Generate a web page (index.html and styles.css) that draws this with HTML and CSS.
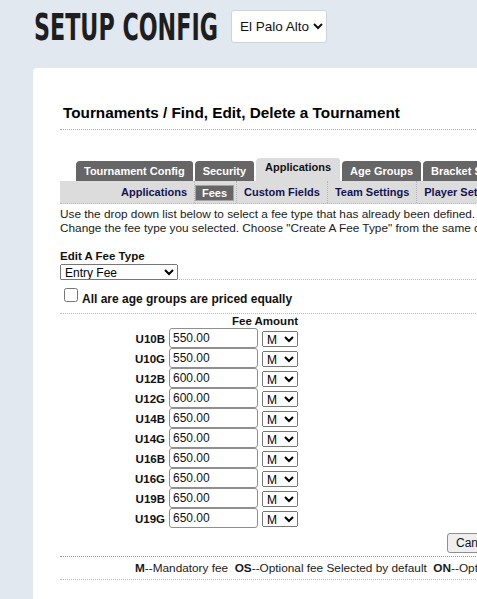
FILE: index.html
```html
<!DOCTYPE html>
<html>
<head>
<meta charset="utf-8">
<title>Setup Config</title>
<link rel="stylesheet" href="styles.css">
</head>
<body>
<header class="top">
  <div class="brand"><span class="brand-text">SETUP CONFIG</span></div>
  <select class="club-select"><option>El Palo Alto</option></select>
</header>
<main class="card">
  <h2 class="page-title">Tournaments / Find, Edit, Delete a Tournament</h2>
  <nav class="tabs">
    <a class="tab">Tournament Config</a>
    <a class="tab">Security</a>
    <a class="tab active">Applications</a>
    <a class="tab">Age Groups</a>
    <a class="tab">Bracket Settings</a>
    <a class="tab">Schedule</a>
  </nav>
  <nav class="subtabs">
    <span class="sub">Applications</span>
    <span class="sub active"><span class="sub-box">Fees</span></span>
    <span class="sub">Custom Fields</span>
    <span class="sub">Team Settings</span>
    <span class="sub">Player Settings</span>
  </nav>
  <p class="intro">Use the drop down list below to select a fee type that has already been defined. Or<br>Change the fee type you selected. Choose "Create A Fee Type" from the same drop down list to add a new one.</p>
  <div class="fee-type">
    <div class="label-strong">Edit A Fee Type</div>
    <select class="fee-select"><option>Entry Fee</option></select>
  </div>
  <div class="equal-row">
    <input type="checkbox" class="chk" id="eq">
    <label for="eq" class="label-strong big">All are age groups are priced equally</label>
  </div>
  <div class="fees">
    <div class="fee-head">Fee Amount</div>
    <div class="fee-grid">
      <span class="age">U10B</span><input class="amt" value="550.00"><select class="opt"><option>M</option></select>
      <span class="age">U10G</span><input class="amt" value="550.00"><select class="opt"><option>M</option></select>
      <span class="age">U12B</span><input class="amt" value="600.00"><select class="opt"><option>M</option></select>
      <span class="age">U12G</span><input class="amt" value="600.00"><select class="opt"><option>M</option></select>
      <span class="age">U14B</span><input class="amt" value="650.00"><select class="opt"><option>M</option></select>
      <span class="age">U14G</span><input class="amt" value="650.00"><select class="opt"><option>M</option></select>
      <span class="age">U16B</span><input class="amt" value="650.00"><select class="opt"><option>M</option></select>
      <span class="age">U16G</span><input class="amt" value="650.00"><select class="opt"><option>M</option></select>
      <span class="age">U19B</span><input class="amt" value="650.00"><select class="opt"><option>M</option></select>
      <span class="age">U19G</span><input class="amt" value="650.00"><select class="opt"><option>M</option></select>
    </div>
    <div class="actions"><button class="btn">Cancel</button><button class="btn">Save</button></div>
    <div class="legend"><b>M</b>--Mandatory fee&nbsp; <b>OS</b>--Optional fee Selected by default&nbsp; <b>ON</b>--Optional fee Not selected by default</div>
  </div>
</main>
</body>
</html>
```
FILE: styles.css
```css
html, body { overflow-x: hidden; }
body {
  margin: 0;
  background: #e2e8f0;
  font-family: "Liberation Sans", Arial, sans-serif;
  color: #111;
}
.top {
  display: flex;
  align-items: center;
  padding: 10px 0 0 34px;
  height: 33px;
}
.brand {
  width: 181px;
  margin-right: 16px;
  height: 33px;
  overflow: visible;
  white-space: nowrap;
}
.brand-text {
  display: inline-block;
  font-family: "DejaVu Sans Condensed", "Liberation Sans", sans-serif;
  font-weight: bold;
  font-size: 38px;
  line-height: 35px;
  color: #1e1e1e;
  transform: scaleX(0.65);
  transform-origin: left center;
}
.club-select {
  height: 33px;
  font-family: "Liberation Sans", Arial, sans-serif;
  font-size: 13.5px;
  background: #fff;
  border: 1px solid #cfd4da;
  border-radius: 3px;
  padding: 0 0 0 4px;
  color: #111;
}
.card {
  margin: 25px 0 0 33px;
  width: 760px;
  background: #fff;
  border-radius: 4px 0 0 0;
  padding: 36px 0 20px 27px;
}
.page-title {
  margin: 0;
  padding: 0 0 7px 3px;
  font-size: 15.3px;
  line-height: 18px;
  font-weight: bold;
  color: #000;
  border-bottom: 1px dotted #a9a2dc;
}
.tabs {
  display: flex;
  align-items: flex-end;
  gap: 2px;
  margin-top: 28px;
  padding-left: 16px;
  height: 23px;
  white-space: nowrap;
}
.tab {
  display: block;
  height: 20px;
  line-height: 20px;
  padding: 0 8px;
  font-size: 11px;
  font-weight: bold;
  color: #fff;
  background: #666;
  border-radius: 4px 3px 0 0;
}
.tab.active {
  height: 23px;
  line-height: 19px;
  padding: 0 9px;
  background: #dcdcdc;
  color: #111;
}
.subtabs {
  display: flex;
  align-items: center;
  height: 22px;
  background: #dcdcdc;
  padding-left: 54px;
  border-bottom: 1px dotted #b7b2dc;
  white-space: nowrap;
}
.sub {
  padding: 0 7px;
  font-size: 11px;
  font-weight: bold;
  color: #13134f;
  line-height: 22px;
  border-right: 1px dotted #b5b5b5;
}
.sub.active { padding: 0 2px 0 0; }
.sub-box {
  display: inline-block;
  height: 14px;
  line-height: 14px;
  padding: 0 6px;
  background: #666;
  color: #fff;
  border: 1px solid #a3a3a3;
  vertical-align: middle;
}
.intro {
  margin: 3px 0 0 0;
  font-size: 11.8px;
  line-height: 14px;
  color: #1a1a1a;
  white-space: nowrap;
}
.fee-type {
  margin-top: 14px;
  border-bottom: 1px dotted #b7b2dc;
  height: 30px;
}
.label-strong {
  font-size: 11.5px;
  font-weight: bold;
  line-height: 14px;
  color: #111;
}
.fee-select {
  position: relative;
  display: block;
  width: 118px;
  height: 16px;
  font-size: 12px;
  font-family: "Liberation Sans", Arial, sans-serif;
  padding: 0;
  margin: 1px 0 0 0;
}
.equal-row {
  display: flex;
  align-items: center;
  height: 33px;
  border-bottom: 1px dotted #b7b2dc;
}
.chk {
  width: 14px;
  height: 14px;
  margin: 0 4px 0 4px;
  position: relative;
  top: -2px;
}
.label-strong.big {
  font-size: 12px;
  margin-top: 5px;
}
.fees { margin-left: 74px; }
.fee-head {
  width: 164px;
  text-align: right;
  font-size: 11.5px;
  font-weight: bold;
  line-height: 14px;
}
.fee-grid {
  display: grid;
  grid-template-columns: 31px 89px 36px;
  grid-auto-rows: 20px;
  column-gap: 4px;
  align-items: start;
}
.age {
  text-align: right;
  font-size: 11.5px;
  font-weight: bold;
  line-height: 20px;
  padding-top: 1px;
}
.amt {
  box-sizing: border-box;
  width: 89px;
  height: 20px;
  margin: 0;
  padding: 0 3px;
  font-family: "Liberation Sans", Arial, sans-serif;
  font-size: 12px;
  border: 1px solid #8f8f8f;
  border-radius: 3px;
  color: #111;
}
.opt {
  box-sizing: border-box;
  width: 36px;
  height: 16px;
  margin-top: 3px;
  padding: 0;
  font-size: 12px;
  font-family: "Liberation Sans", Arial, sans-serif;
}
.actions {
  display: flex;
  gap: 4px;
  padding-left: 313px;
  margin-top: 5px;
  height: 23px;
}
.btn {
  height: 20px;
  padding: 0 8px;
  font-family: "Liberation Sans", Arial, sans-serif;
  font-size: 12px;
  background: #efefef;
  border: 1px solid #8f8f8f;
  border-radius: 3px;
  color: #111;
}
.legend {
  border-top: 1px dotted #9a9a9a;
  border-bottom: 1px dotted #b7b2dc;
  margin-left: -74px;
  padding: 4px 0 4px 75px;
  font-size: 11.8px;
  line-height: 14px;
  white-space: nowrap;
  color: #1a1a1a;
}
```
